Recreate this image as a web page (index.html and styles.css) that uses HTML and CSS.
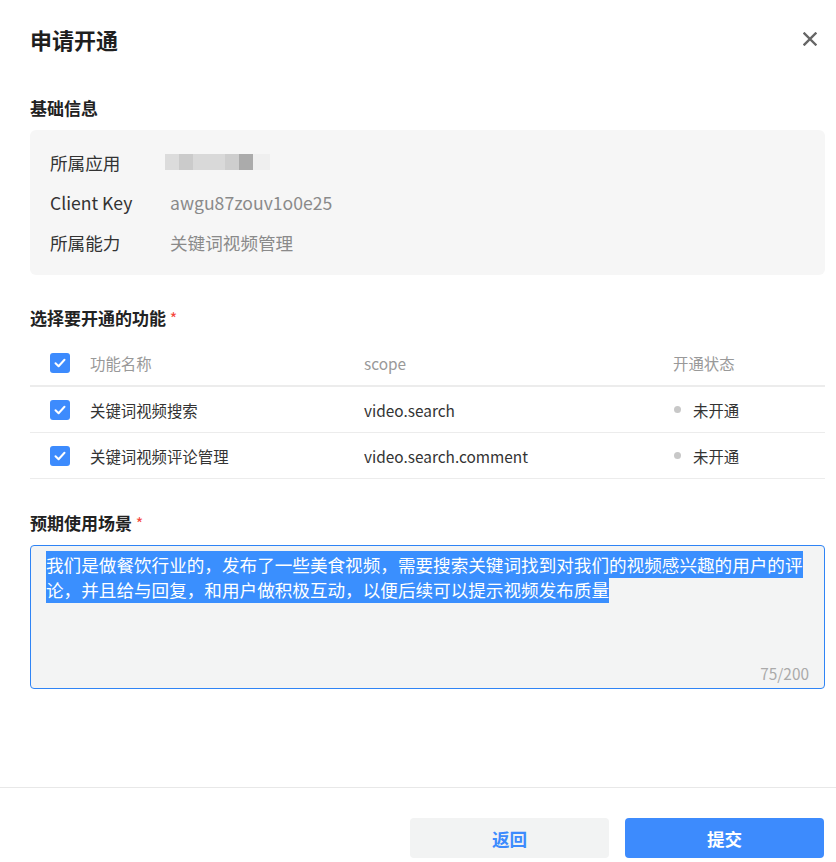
FILE: index.html
```html
<!DOCTYPE html>
<html lang="zh-CN">
<head>
<meta charset="utf-8">
<title>申请开通</title>
<link rel="stylesheet" href="styles.css">
</head>
<body>
<div class="dialog">
  <div class="header">
    <h1 class="title">申请开通</h1>
    <svg class="close" width="14" height="14" viewBox="0 0 14 14"><path d="M1.5 1.5 L12.5 12.5 M12.5 1.5 L1.5 12.5" stroke="#666" stroke-width="2.4" stroke-linecap="square" fill="none"/></svg>
  </div>

  <h2 class="section">基础信息</h2>
  <div class="info">
    <div class="info-row">
      <span class="label">所属应用</span>
      <span class="blur">
        <i class="b1"></i><i class="b2"></i><i class="b3"></i><i class="b4"></i><i class="b5"></i><i class="b6"></i>
      </span>
    </div>
    <div class="info-row">
      <span class="label">Client Key</span>
      <span class="value">awgu87zouv1o0e25</span>
    </div>
    <div class="info-row">
      <span class="label">所属能力</span>
      <span class="value">关键词视频管理</span>
    </div>
  </div>

  <h2 class="section section-gap">选择要开通的功能 <span class="req">*</span></h2>
  <div class="table">
    <div class="tr thead">
      <span class="cb"><svg width="12" height="10" viewBox="0 0 12 10"><path d="M1.5 5.2 L4.6 8.2 L10.5 1.8" stroke="#fff" stroke-width="2" fill="none" stroke-linecap="round" stroke-linejoin="round"/></svg></span>
      <span>功能名称</span>
      <span>scope</span>
      <span>开通状态</span>
    </div>
    <div class="tr">
      <span class="cb"><svg width="12" height="10" viewBox="0 0 12 10"><path d="M1.5 5.2 L4.6 8.2 L10.5 1.8" stroke="#fff" stroke-width="2" fill="none" stroke-linecap="round" stroke-linejoin="round"/></svg></span>
      <span>关键词视频搜索</span>
      <span>video.search</span>
      <span class="status"><i class="dot"></i>未开通</span>
    </div>
    <div class="tr">
      <span class="cb"><svg width="12" height="10" viewBox="0 0 12 10"><path d="M1.5 5.2 L4.6 8.2 L10.5 1.8" stroke="#fff" stroke-width="2" fill="none" stroke-linecap="round" stroke-linejoin="round"/></svg></span>
      <span>关键词视频评论管理</span>
      <span>video.search.comment</span>
      <span class="status"><i class="dot"></i>未开通</span>
    </div>
  </div>

  <h2 class="section section-gap scene">预期使用场景 <span class="req">*</span></h2>
  <div class="textarea">
    <p class="ta-text"><span class="sel">我们是做餐饮行业的，发布了一些美食视频，需要搜索关键词找到对我们的视频感兴趣的用户的评论，并且给与回复，和用户做积极互动，以便后续可以提示视频发布质量</span></p>
    <span class="count">75/200</span>
  </div>
</div>

<div class="footer">
  <button class="btn btn-back">返回</button>
  <button class="btn btn-submit">提交</button>
</div>
</body>
</html>
```

FILE: styles.css
```css
* { box-sizing: border-box; }
html, body {
  margin: 0;
  padding: 0;
  background: #fff;
  font-family: "Noto Sans CJK SC", "Noto Sans", sans-serif;
  color: #333;
}
.dialog {
  padding: 24px 11px 0 30px;
  height: 787px;
}
.header {
  display: flex;
  align-items: center;
  justify-content: space-between;
  height: 30px;
  padding-right: 8px;
}
.title {
  margin: 0;
  font-size: 22px;
  line-height: 30px;
  font-weight: 700;
  color: #1f1f1f;
}
.close { display: block; }

.section {
  margin: 42px 0 10px;
  font-size: 17px;
  line-height: 24px;
  font-weight: 700;
  color: #222;
}
.section-gap { margin-top: 31px; }
.section.scene { margin-top: 32px; }
.req { color: #f5483b; font-weight: 400; font-size: 16px; }

.info {
  background: #f6f6f6;
  border-radius: 6px;
  padding: 12px 20px 10px;
  height: 145px;
}
.info-row {
  display: flex;
  align-items: center;
  height: 40px;
  font-size: 17.6px;
}
.label { width: 120px; color: #333; }
.value { color: #8a8a8a; }
.blur {
  display: flex;
  height: 16px;
  margin-left: -5px;
}
.blur i { display: block; height: 16px; }
.blur .b1 { width: 14px; background: #dcdcdc; }
.blur .b2 { width: 14px; background: #cbcbcb; }
.blur .b3 { width: 32px; background: #d9d9d9; }
.blur .b4 { width: 14px; background: #cecece; }
.blur .b5 { width: 14px; background: #ababab; }
.blur .b6 { width: 17px; background: #efefef; }

.table { margin-top: 8px; }
.tr {
  display: grid;
  grid-template-columns: 40px 274px 309px 1fr;
  align-items: center;
  height: 46px;
  border-bottom: 1px solid #ececec;
  font-size: 15.4px;
  color: #333;
  padding-left: 20px;
}
.tr.thead {
  height: 47px;
  border-bottom: 2px solid #ececec;
  color: #999;
}
.cb {
  width: 20px;
  height: 20px;
  border-radius: 3px;
  background: #3d8bfd;
  display: flex;
  align-items: center;
  justify-content: center;
}
.cb svg { display: block; }
.status { display: flex; align-items: center; }
.dot {
  width: 7px;
  height: 7px;
  border-radius: 50%;
  background: #c8c8c8;
  margin: 0 12px 0 1px;
}

.textarea {
  position: relative;
  height: 144px;
  border: 1px solid #2f84f5;
  border-radius: 4px;
  background: #f3f4f4;
  padding: 6px 15px;
}
.ta-text {
  margin: 0;
  font-size: 17.6px;
  line-height: 25px;
  color: #fff;
}
.sel {
  background: #3a8ffe;
  padding: 1px 0;
}
.count {
  position: absolute;
  right: 15px;
  bottom: 4px;
  font-size: 15.4px;
  color: #aaa;
}

.footer {
  border-top: 1px solid #e8e8e8;
  display: flex;
  justify-content: flex-end;
  gap: 16px;
  padding: 30px 12px 0 0;
}
.btn {
  width: 199px;
  height: 40px;
  border: none;
  border-radius: 4px;
  font-family: inherit;
  font-size: 17.6px;
  font-weight: 700;
}
.btn-back { background: #f2f3f3; color: #3d8bfd; }
.btn-submit { background: #3d8bfd; color: #fff; }
```
